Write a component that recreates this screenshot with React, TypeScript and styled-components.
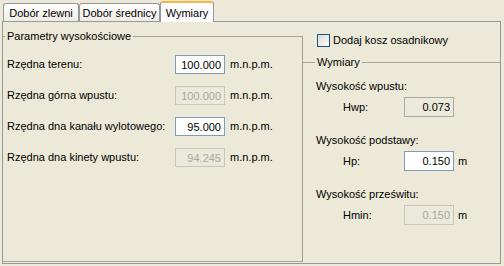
import React from 'react'
import styled, { createGlobalStyle } from 'styled-components'

const GlobalStyle = createGlobalStyle`
  html, body {
    margin: 0;
    padding: 0;
    background: #ece9d8;
  }
  body {
    font-family: 'Liberation Sans', Arial, sans-serif;
    font-size: 11px;
    color: #000;
  }
`

const Window = styled.div`
  width: 504px;
  height: 266px;
  padding-top: 1px;
  box-sizing: border-box;
  background: #ece9d8;
  overflow: hidden;
  display: flex;
  flex-direction: column;
`

const TabStrip = styled.div`
  display: flex;
  align-items: flex-end;
  height: 20px;
  padding-left: 3px;
  position: relative;
  z-index: 1;
`

const Tab = styled.div<{ $width: number; $active?: boolean }>`
  box-sizing: border-box;
  width: ${(p) => p.$width}px;
  height: ${(p) => (p.$active ? 21 : 18)}px;
  margin-bottom: ${(p) => (p.$active ? -1 : 0)}px;
  border: 1px solid #919b9c;
  border-bottom: none;
  border-radius: 3px 3px 0 0;
  background: ${(p) =>
    p.$active ? '#fcfcfe' : 'linear-gradient(#ffffff, #f3f2ec 70%, #ecebe5)'};
  border-top: ${(p) => (p.$active ? '2px solid #f4b83e' : '1px solid #919b9c')};
  display: flex;
  align-items: center;
  justify-content: center;
  padding-top: ${(p) => (p.$active ? 0 : 1)}px;
  white-space: nowrap;
`

const Panel = styled.div`
  box-sizing: border-box;
  margin: 0 3px 2px 2px;
  flex: 1;
  border: 1px solid #919b9c;
  background: #ece9d8;
  display: flex;
`

const Group = styled.fieldset`
  margin: 0;
  padding: 0;
  min-width: 0;
  box-sizing: border-box;
  border: 1px solid #a7a596;
`

const LeftGroup = styled(Group)`
  width: 300px;
  margin-top: 8px;
  margin-bottom: 1px;
  border-left: none;
  border-right-color: #a09e90;
`

const Legend = styled.legend<{ $indent: number }>`
  padding: 0 2px;
  margin-left: ${(p) => p.$indent}px;
  line-height: 13px;
`

const LevelGrid = styled.div`
  display: grid;
  grid-template-columns: 163px 50px auto;
  grid-auto-rows: 19px;
  row-gap: 12px;
  column-gap: 5px;
  align-items: center;
  padding: 12px 0 0 4px;
`

const Field = styled.input<{ $tall?: boolean }>`
  box-sizing: border-box;
  width: 50px;
  height: ${(p) => (p.$tall ? 20 : 19)}px;
  margin: 0;
  padding: 0 3px 0 0;
  border: 1px solid #7f9db9;
  background: #fff;
  font-family: 'Liberation Sans', Arial, sans-serif;
  font-size: 11px;
  color: #000;
  text-align: right;
  outline: none;
  &:read-only {
    border-color: #a9aba0;
    background: #ebe9db;
  }
  &:disabled {
    border-color: #c9c7ba;
    background: #ebe9db;
    color: #aca899;
    -webkit-text-fill-color: #aca899;
    opacity: 1;
  }
`

const Label = styled.span`
  white-space: nowrap;
  line-height: 13px;
`

const RightColumn = styled.div`
  flex: 1;
  display: flex;
  flex-direction: column;
`

const CheckRow = styled.label`
  display: flex;
  align-items: center;
  gap: 3px;
  margin: 12px 0 0 14px;
  line-height: 13px;
`

const CheckBox = styled.span`
  box-sizing: border-box;
  width: 13px;
  height: 13px;
  border: 1px solid #1c5180;
  background: linear-gradient(135deg, #dcdcd7, #fbfbf9);
`

const RightGroup = styled(Group)`
  margin-top: 9px;
  flex: 1;
  border: none;
  border-top: 1px solid #a7a596;
`

const Section = styled.div`
  display: flex;
  flex-direction: column;
  gap: 4px;
`

const Sections = styled.div`
  display: flex;
  flex-direction: column;
  gap: 17px;
  padding: 11px 0 0 13px;
`

const SubRow = styled.div`
  display: grid;
  grid-template-columns: 57px 50px auto;
  column-gap: 4px;
  align-items: center;
  padding-left: 27px;
`

type Mode = 'edit' | 'readonly' | 'disabled'

const levels: { label: string; value: string; mode: Mode }[] = [
  { label: 'Rzędna terenu:', value: '100.000', mode: 'edit' },
  { label: 'Rzędna górna wpustu:', value: '100.000', mode: 'disabled' },
  { label: 'Rzędna dna kanału wylotowego:', value: '95.000', mode: 'edit' },
  { label: 'Rzędna dna kinety wpustu:', value: '94.245', mode: 'disabled' },
]

const dims: { title: string; short: string; value: string; mode: Mode; unit: string }[] = [
  { title: 'Wysokość wpustu:', short: 'Hwp:', value: '0.073', mode: 'readonly', unit: '' },
  { title: 'Wysokość podstawy:', short: 'Hp:', value: '0.150', mode: 'edit', unit: 'm' },
  { title: 'Wysokość prześwitu:', short: 'Hmin:', value: '0.150', mode: 'disabled', unit: 'm' },
]

const App = () => {
  return (
    <Window>
      <GlobalStyle />
      <TabStrip>
        <Tab $width={76}>Dobór zlewni</Tab>
        <Tab $width={81}>Dobór średnicy</Tab>
        <Tab $width={54} $active>
          Wymiary
        </Tab>
      </TabStrip>
      <Panel>
        <LeftGroup>
          <Legend $indent={2}>Parametry wysokościowe</Legend>
          <LevelGrid>
            {levels.map((e) => (
              <React.Fragment key={e.label}>
                <Label>{e.label}</Label>
                <Field
                  defaultValue={e.value}
                  disabled={e.mode === 'disabled'}
                  readOnly={e.mode === 'readonly'}
                />
                <Label>m.n.p.m.</Label>
              </React.Fragment>
            ))}
          </LevelGrid>
        </LeftGroup>
        <RightColumn>
          <CheckRow>
            <CheckBox />
            Dodaj kosz osadnikowy
          </CheckRow>
          <RightGroup>
            <Legend $indent={12}>Wymiary</Legend>
            <Sections>
              {dims.map((e) => (
                <Section key={e.short}>
                  <Label>{e.title}</Label>
                  <SubRow>
                    <Label>{e.short}</Label>
                    <Field
                      $tall
                      defaultValue={e.value}
                      disabled={e.mode === 'disabled'}
                      readOnly={e.mode === 'readonly'}
                    />
                    <Label>{e.unit}</Label>
                  </SubRow>
                </Section>
              ))}
            </Sections>
          </RightGroup>
        </RightColumn>
      </Panel>
    </Window>
  )
}

export default App
